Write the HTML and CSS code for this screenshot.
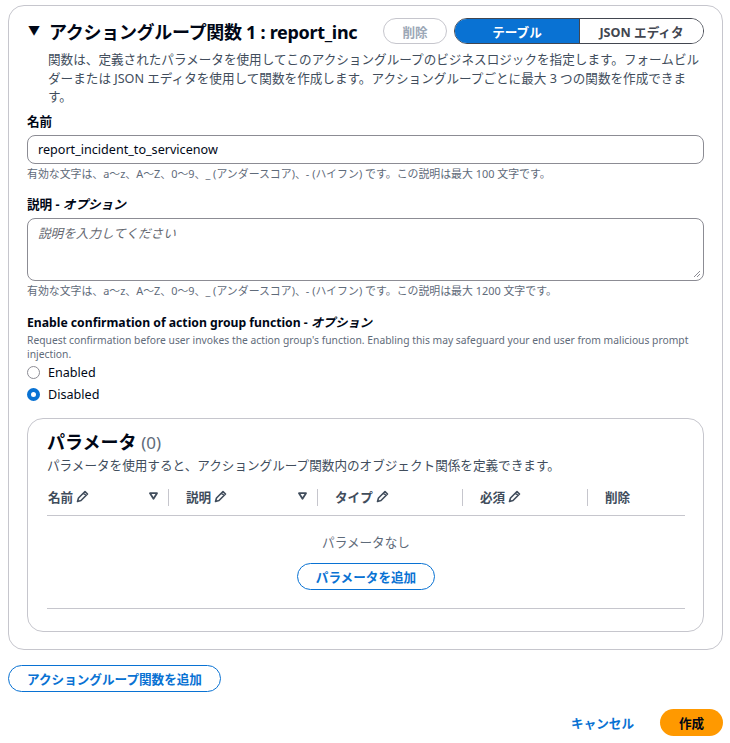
FILE: index.html
```html
<!DOCTYPE html>
<html lang="ja">
<head>
<meta charset="utf-8">
<link rel="stylesheet" href="styles.css">
</head>
<body>
<div class="page">
  <section class="card">
    <div class="card-head">
      <div class="title">
        <span class="caret">▼</span>
        <h2>アクショングループ関数 1 : report_inc</h2>
      </div>
      <div class="head-actions">
        <button class="btn-disabled">削除</button>
        <div class="segmented">
          <button class="seg seg-on">テーブル</button>
          <button class="seg">JSON エディタ</button>
        </div>
      </div>
    </div>
    <p class="card-desc">関数は、定義されたパラメータを使用してこのアクショングループのビジネスロジックを指定します。フォームビルダーまたは JSON エディタを使用して関数を作成します。アクショングループごとに最大 3 つの関数を作成できます。</p>

    <div class="field">
      <label class="label">名前</label>
      <div class="input">report_incident_to_servicenow</div>
      <div class="hint">有効な文字は、a〜z、A〜Z、0〜9、_ (アンダースコア)、- (ハイフン) です。この説明は最大 100 文字です。</div>
    </div>

    <div class="field second">
      <label class="label">説明 - <i>オプション</i></label>
      <div class="textarea"><span class="placeholder">説明を入力してください</span>
        <svg class="grip" width="8" height="8" viewBox="0 0 8 8"><path d="M7 1L1 7M7 4L4 7" stroke="#8c8c94" stroke-width="1"/></svg>
      </div>
      <div class="hint">有効な文字は、a〜z、A〜Z、0〜9、_ (アンダースコア)、- (ハイフン) です。この説明は最大 1200 文字です。</div>
    </div>

    <div class="field confirm">
      <div class="label-en">Enable confirmation of action group function - <i>オプション</i></div>
      <div class="desc-en">Request confirmation before user invokes the action group's function. Enabling this may safeguard your end user from malicious prompt injection.</div>
      <div class="radios">
        <div class="radio"><span class="dot"></span>Enabled</div>
        <div class="radio"><span class="dot dot-on"></span>Disabled</div>
      </div>
    </div>

    <div class="params">
      <h3>パラメータ <span class="count">(0)</span></h3>
      <p class="params-desc">パラメータを使用すると、アクショングループ関数内のオブジェクト関係を定義できます。</p>
      <div class="thead">
        <div class="th first">名前 <svg class="pen" width="13" height="13" viewBox="0 0 13 13"><path d="M9 1.5l2.5 2.5-6.5 6.5-3.5 1 1-3.5z M7.5 3l2.5 2.5" fill="none" stroke="#414d5c" stroke-width="1.6" stroke-linejoin="round"/></svg><svg class="sort" width="9" height="8" viewBox="0 0 9 8"><path d="M1 1.2h7L4.5 6.8z" fill="none" stroke="#414d5c" stroke-width="1.8" stroke-linejoin="round"/></svg></div>
        <div class="th">説明 <svg class="pen" width="13" height="13" viewBox="0 0 13 13"><path d="M9 1.5l2.5 2.5-6.5 6.5-3.5 1 1-3.5z M7.5 3l2.5 2.5" fill="none" stroke="#414d5c" stroke-width="1.6" stroke-linejoin="round"/></svg><svg class="sort" width="9" height="8" viewBox="0 0 9 8"><path d="M1 1.2h7L4.5 6.8z" fill="none" stroke="#414d5c" stroke-width="1.8" stroke-linejoin="round"/></svg></div>
        <div class="th">タイプ <svg class="pen" width="13" height="13" viewBox="0 0 13 13"><path d="M9 1.5l2.5 2.5-6.5 6.5-3.5 1 1-3.5z M7.5 3l2.5 2.5" fill="none" stroke="#414d5c" stroke-width="1.6" stroke-linejoin="round"/></svg></div>
        <div class="th">必須 <svg class="pen" width="13" height="13" viewBox="0 0 13 13"><path d="M9 1.5l2.5 2.5-6.5 6.5-3.5 1 1-3.5z M7.5 3l2.5 2.5" fill="none" stroke="#414d5c" stroke-width="1.6" stroke-linejoin="round"/></svg></div>
        <div class="th">削除</div>
      </div>
      <div class="empty">
        <div class="empty-text">パラメータなし</div>
        <button class="btn-outline">パラメータを追加</button>
      </div>
    </div>
  </section>

  <div class="add-row">
    <button class="btn-outline wide">アクショングループ関数を追加</button>
  </div>

  <div class="footer">
    <button class="btn-link">キャンセル</button>
    <button class="btn-primary">作成</button>
  </div>
</div>
</body>
</html>
```

FILE: styles.css
```css
* { box-sizing: border-box; }
html, body { margin: 0; padding: 0; background: #fff; }
body {
  font-family: "Noto Sans", "Noto Sans CJK JP", sans-serif;
  color: #000716;
  font-size: 12.6px;
}
button { font-family: inherit; cursor: pointer; }
.page { padding: 5px 7px 0 8px; }

.card {
  border: 1px solid #c6c6cd;
  border-radius: 16px;
  padding: 11px 18px 17px 18px;
}
.card-head {
  display: flex;
  justify-content: space-between;
  align-items: center;
  height: 28px;
}
.title { display: flex; align-items: center; gap: 9px; padding-left: 1px; }
.caret { font-size: 12px; line-height: 1; }
.title h2 {
  margin: 0;
  font-size: 18px;
  font-weight: 700;
  letter-spacing: -0.3px;
  font-family: "Noto Sans", "Noto Sans CJK JP", sans-serif;
}
.head-actions { display: flex; align-items: center; gap: 7px; }
.btn-disabled {
  height: 26px;
  width: 64px;
  border: 1px solid #c6c6cd;
  border-radius: 14px;
  background: #fff;
  color: #9ba7b6;
  font-size: 12.6px;
  font-weight: 700;
  padding: 0;
}
.segmented {
  display: flex;
  height: 26px;
  border: 1px solid #424650;
  border-radius: 14px;
  overflow: hidden;
}
.seg {
  border: 0;
  background: #fff;
  color: #424650;
  font-weight: 700;
  font-size: 12.6px;
  padding: 0;
  width: 123px;
}
.seg-on { background: #0972d3; color: #fff; width: 125px; border-right: 1px solid #424650; }

.card-desc {
  margin: 6px 0 0 21px;
  color: #414d5c;
  line-height: 18.5px;
  font-size: 12.6px;
}

.field { margin-top: 6px; }
.field.second { margin-top: 15px; }
.label {
  display: block;
  font-weight: 700;
  font-size: 12.6px;
  line-height: 18px;
}
.label i { font-style: italic; }
.input {
  margin-top: 4px;
  height: 29px;
  border: 1px solid #8c8c94;
  border-radius: 8px;
  padding: 0 10px;
  display: flex;
  align-items: center;
  font-size: 12.6px;
}
.hint {
  margin-top: 3px;
  font-size: 10.9px;
  color: #5f6b7a;
  line-height: 14px;
}
.textarea {
  margin-top: 4px;
  height: 63px;
  border: 1px solid #8c8c94;
  border-radius: 8px;
  padding: 4px 10px;
  position: relative;
}
.placeholder { color: #656871; font-style: italic; font-size: 12.6px; }
.grip { position: absolute; right: 2px; bottom: 2px; }

.confirm { margin-top: 16px; }
.label-en { font-weight: 700; font-size: 12.2px; line-height: 18px; }
.desc-en { font-size: 10.3px; color: #5f6b7a; line-height: 14px; margin-top: 1px; }
.radios { margin-top: 1px; }
.radio {
  display: flex;
  align-items: center;
  gap: 8px;
  height: 22px;
  font-size: 12.6px;
}
.dot {
  width: 13px; height: 13px;
  border: 1.5px solid #8c8c94;
  border-radius: 50%;
}
.dot-on { border: 4px solid #0972d3; }

.params {
  margin-top: 12px;
  border: 1px solid #c6c6cd;
  border-radius: 16px;
  padding: 11px 18px 22px 19px;
}
.params h3 {
  margin: 0;
  font-size: 18px;
  font-weight: 700;
  line-height: 24px;
}
.count { font-weight: 400; color: #5f6b7a; font-size: 17px; }
.params-desc {
  margin: 1px 0 0;
  color: #414d5c;
  font-size: 12.6px;
  line-height: 20px;
}
.thead {
  margin-top: 2px;
  display: grid;
  grid-template-columns: 121px 149px 145px 125px 1fr;
  height: 38px;
  border-bottom: 1px solid #c6c6cd;
}
.th {
  display: flex;
  align-items: center;
  gap: 3px;
  font-weight: 700;
  color: #414d5c;
  font-size: 12.6px;
  padding-left: 18px;
  position: relative;
}
.th::before {
  content: "";
  position: absolute;
  left: 0; top: 11px;
  width: 1px; height: 17px;
  background: #c6c6cd;
}
.th.first { padding-left: 1px; }
.th.first::before { display: none; }
.sort { margin-left: auto; margin-right: 10px; }

.empty {
  border-bottom: 1px solid #c6c6cd;
  display: flex;
  flex-direction: column;
  align-items: center;
  padding: 18px 0 18px;
}
.empty-text { color: #5f6b7a; font-size: 12.6px; line-height: 18px; }
.btn-outline {
  margin-top: 11px;
  height: 27px;
  border: 1px solid #0972d3;
  border-radius: 14px;
  background: #fff;
  color: #0972d3;
  font-weight: 700;
  font-size: 12.6px;
  padding: 0 18px;
}
.add-row { margin-top: 15px; }
.btn-outline.wide { margin-top: 0; width: 213px; padding: 0; }

.footer {
  display: flex;
  justify-content: flex-end;
  align-items: center;
  gap: 26px;
  margin-top: 17px;
}
.btn-link {
  border: 0; background: none;
  color: #0972d3;
  font-weight: 700;
  font-size: 12.6px;
  padding: 0;
}
.btn-primary {
  height: 27px;
  width: 63px;
  border: 0;
  border-radius: 14px;
  background: #ff9900;
  color: #000716;
  font-weight: 700;
  font-size: 12.6px;
  padding: 0;
}
```
